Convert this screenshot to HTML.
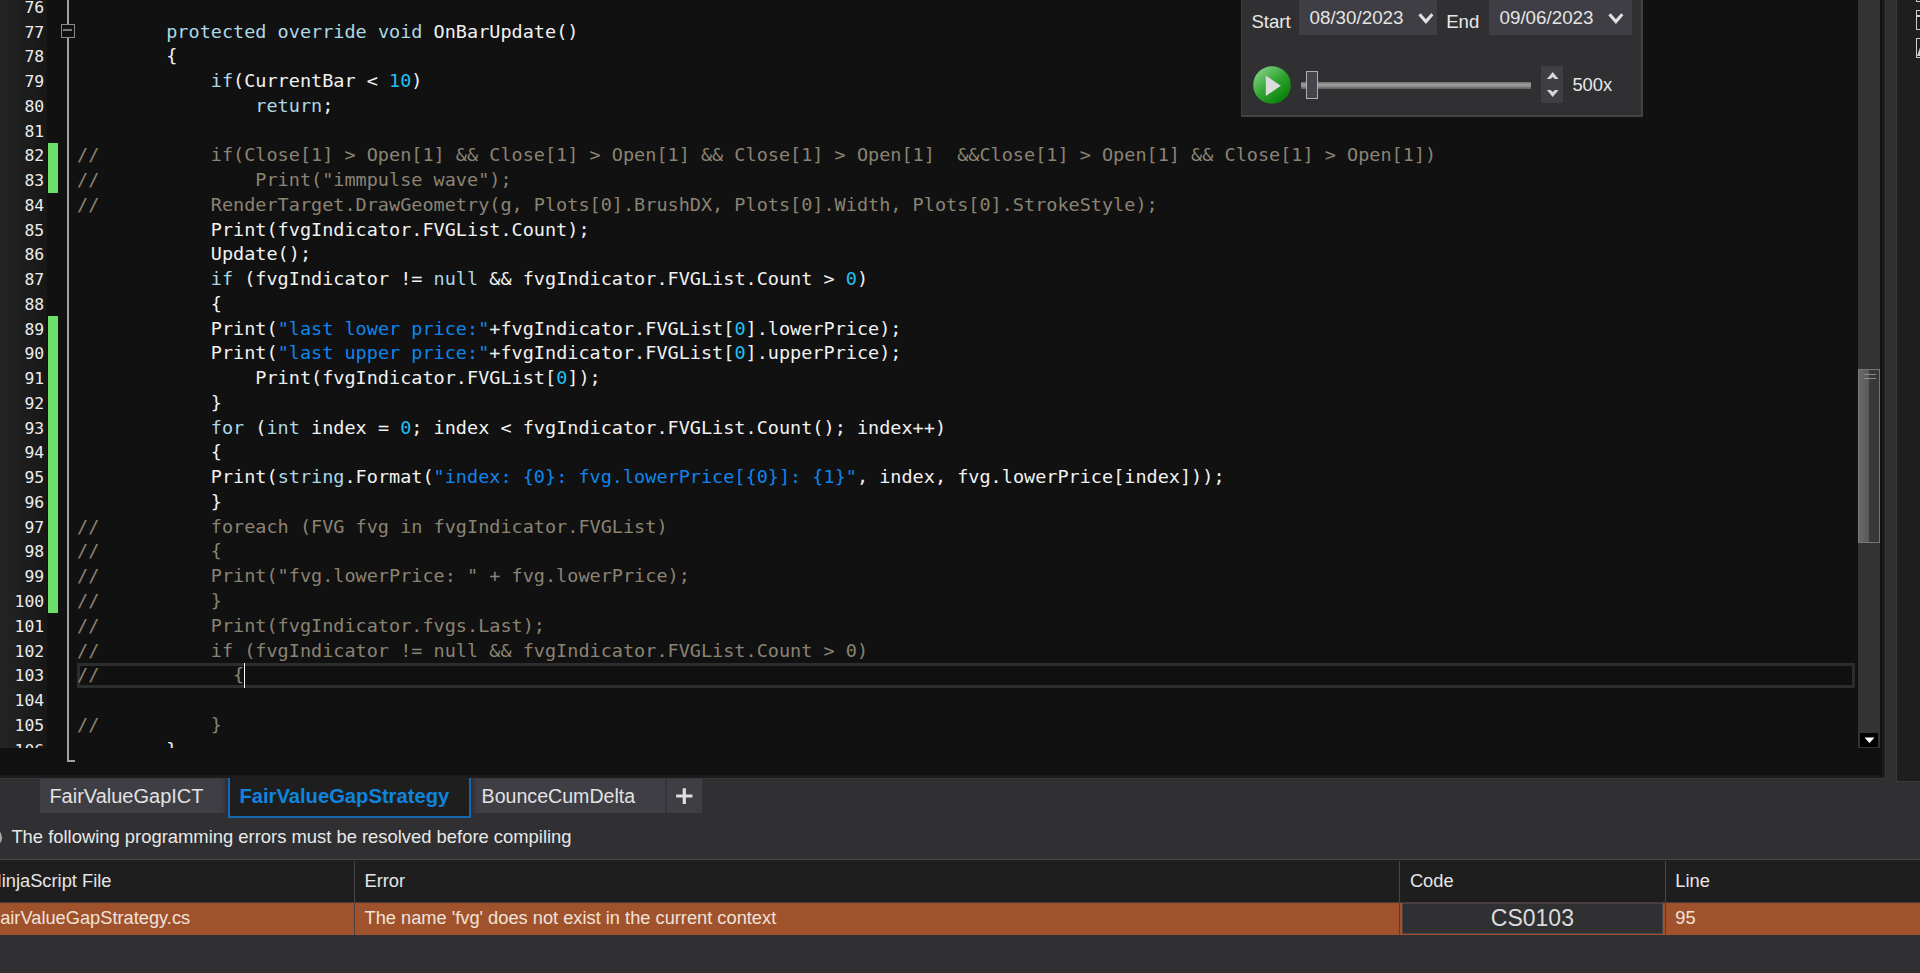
<!DOCTYPE html>
<html lang="en"><head><meta charset="utf-8"><title>NinjaScript Editor</title>
<style>

*{box-sizing:border-box}
html,body{margin:0;padding:0}
body{width:1920px;height:973px;overflow:hidden;background:#303032;position:relative;font-family:"Liberation Sans",sans-serif;color:#e6e6e6}
#editor{position:absolute;left:0;top:0;width:1886px;height:779px;background:#1c1c1c;border-right:1px solid #38383c;border-bottom:1px solid #38383c;overflow:hidden}
#edbg{position:absolute;left:0;top:0;width:1881.7px;height:774.7px;background:#111111}
#clip{position:absolute;left:0;top:0;width:1858px;height:748px;overflow:hidden}
#gutter{position:absolute;left:0;top:0;width:47px;height:748px;background:linear-gradient(90deg,#242424,#171717)}
.chg{position:absolute;left:48.1px;width:10.2px;background:#6ae06a}
.ln{position:absolute;left:0;width:44.2px;text-align:right;font-family:"DejaVu Sans Mono","Liberation Mono",monospace;font-size:16.45px;line-height:24px;height:24px;color:#ececec;white-space:pre;margin-top:1px}
.cl{position:absolute;z-index:2;left:77.1px;font-family:"DejaVu Sans Mono","Liberation Mono",monospace;font-size:18.5px;line-height:24px;height:24px;white-space:pre;color:#f2f2f2;letter-spacing:0.0021px}
.k{color:#add8e6}.n{color:#20c0f2}.s{color:#0c86ec}.c{color:#8b8373}
#curline{position:absolute;left:77px;top:663px;width:1778px;height:24.6px;border:3px solid #2d2d2d;z-index:1}
#caret{position:absolute;left:243.8px;top:663px;width:1.5px;height:24.5px;background:#f6f6f6;z-index:3}
#oline{position:absolute;left:67.2px;top:0;width:2.2px;height:762px;background:#a2a2a2}
#ofoot{position:absolute;left:67.2px;top:760px;width:8px;height:2.1px;background:#a2a2a2}
#fold{position:absolute;left:60.8px;top:24px;width:14.6px;height:14px;border:1.6px solid #888;background:#111}
#fold i{position:absolute;left:1.6px;top:4.2px;width:8.2px;height:2px;background:#787878}

#vsb{position:absolute;left:1858px;top:0;width:22px;height:748px;background:#333334}
#thumb{position:absolute;left:0;top:369px;width:22px;height:174px;border:1px solid #777;background:linear-gradient(90deg,#686868 0,#5a5a5a 48%,#3a3a3a 52%,#363636 100%)}
#thumb b{position:absolute;left:5px;width:12px;height:1px;background:#8a8a8a}
#thumb b:nth-child(1){top:4px}#thumb b:nth-child(2){top:8px}
#dn{position:absolute;left:1.7px;top:732.9px;width:18.8px;height:14px;background:#000}
#dn svg{display:block}

#panel{position:absolute;left:1241px;top:-2px;width:402px;height:118.5px;background:#303032;border:1.5px solid #444446;border-right:2.5px solid #434345;border-bottom:2.5px solid #434345;border-left:1px solid #3c3c3e}
.lbl{position:absolute;font-size:18.6px;line-height:22px;color:#e8e8e8;white-space:pre}
.dbox{position:absolute;top:0;height:34.7px;background:#3e3e44}
.dbox span{position:absolute;left:10.5px;top:6.5px;font-size:18.8px;line-height:22px;color:#e4e4e4;white-space:pre}
.dbox svg{position:absolute;top:12px}
#play{position:absolute;left:1253px;top:66px;width:38px;height:38px}
#track{position:absolute;left:1301px;top:82px;width:230.2px;height:7px;background:linear-gradient(180deg,#707070 0,#a0a0a0 40%,#8c8c8c 60%,#606060 100%)}
#knob{position:absolute;left:1306px;top:71px;width:12.3px;height:28px;background:#45454b;border:1.2px solid #b0b0b0}
#spin{position:absolute;left:1540.6px;top:66px;width:22.4px;height:37px;background:#3e3e44}
#spin svg{display:block}

#rstrip{position:absolute;left:1896px;top:0;width:24px;height:781.6px;background:#1e1e1e;border-left:1px solid #3a3a3c;border-bottom:1.5px solid #3a3a3c}
.ric{position:absolute;left:1915.5px;width:8px;border:1.5px solid #d0d0d0}

.tab{position:absolute;top:779px;height:33.6px;background:#3f3e45;font-size:20px;line-height:35px;white-space:pre;color:#e2e2e2}
#t1{left:40.2px;width:187.8px;padding-left:9.2px;background:linear-gradient(90deg,#3f3e45 0,#3f3e45 182px,#2c2c30 188px)}
#t2{left:228px;top:778px;width:243px;height:40px;background:#1e1e1e;border:2px solid #1468ad;border-top:0;color:#0f84de;font-weight:bold;font-size:20.2px;padding-left:9.4px;line-height:37px}
#t3{left:471px;width:194.6px;padding-left:10.6px;font-size:19.6px;background:linear-gradient(90deg,#2c2c30 0,#3f3e45 6px)}
#t4{left:666.8px;width:35.5px}
#t4 svg{position:absolute;left:8.9px;top:8.7px}
#tsep{position:absolute;left:665.4px;top:779px;width:1.5px;height:33.6px;background:#35353a}
#msg{position:absolute;left:11.4px;top:826px;font-size:18.4px;line-height:22px;white-space:pre;color:#e8e8e8}
#dot{position:absolute;left:-17.5px;top:827.7px;width:19.7px;height:19.7px;border-radius:50%;background:#c8504a;border:2.2px solid #a8a8a8}
#thead{position:absolute;left:0;top:859px;width:1920px;height:44px;background:#1e1e1e;border-top:1.6px solid #47474b}
.th{position:absolute;top:860.6px;height:42px;font-size:18.3px;line-height:39px;white-space:pre;color:#e6e6e6;border-left:1.5px solid #45454a;padding-left:9.6px}
#row{position:absolute;left:0;top:902.4px;width:1920px;height:32.4px;background:#a0522d;border-top:1px solid #4a3a38}
.td{position:absolute;top:903px;height:31.8px;font-size:18.25px;line-height:29px;white-space:pre;color:#efe3da;border-left:1.5px solid #4a4046;padding-left:9.6px}
#code{position:absolute;left:1402.1px;top:903.2px;width:260.6px;height:31.3px;background:#303032;border:1.2px solid #4a4246;font-size:23px;line-height:29px;text-align:center;color:#dcdcdc}
</style></head>
<body>
<div id="editor">
<div id="edbg"></div>
<div id="clip">
<div id="gutter"></div>
<div class="chg" style="top:142.70px;height:49.86px"></div>
<div class="chg" style="top:316.02px;height:297.46px"></div>
<div class="ln" style="top:-5.26px">76</div>
<div class="ln" style="top:19.50px">77</div><div class="cl" style="top:19.50px">        <span class="k">protected override void</span> OnBarUpdate()</div>
<div class="ln" style="top:44.26px">78</div><div class="cl" style="top:44.26px">        {</div>
<div class="ln" style="top:69.02px">79</div><div class="cl" style="top:69.02px">            <span class="k">if</span>(CurrentBar &lt; <span class="n">10</span>)</div>
<div class="ln" style="top:93.78px">80</div><div class="cl" style="top:93.78px">                <span class="k">return</span>;</div>
<div class="ln" style="top:118.54px">81</div>
<div class="ln" style="top:143.30px">82</div><div class="cl" style="top:143.30px"><span class="c">//          if(Close[1] &gt; Open[1] &amp;&amp; Close[1] &gt; Open[1] &amp;&amp; Close[1] &gt; Open[1]  &amp;&amp;Close[1] &gt; Open[1] &amp;&amp; Close[1] &gt; Open[1])</span></div>
<div class="ln" style="top:168.06px">83</div><div class="cl" style="top:168.06px"><span class="c">//              Print("immpulse wave");</span></div>
<div class="ln" style="top:192.82px">84</div><div class="cl" style="top:192.82px"><span class="c">//          RenderTarget.DrawGeometry(g, Plots[0].BrushDX, Plots[0].Width, Plots[0].StrokeStyle);</span></div>
<div class="ln" style="top:217.58px">85</div><div class="cl" style="top:217.58px">            Print(fvgIndicator.FVGList.Count);</div>
<div class="ln" style="top:242.34px">86</div><div class="cl" style="top:242.34px">            Update();</div>
<div class="ln" style="top:267.10px">87</div><div class="cl" style="top:267.10px">            <span class="k">if</span> (fvgIndicator != <span class="k">null</span> &amp;&amp; fvgIndicator.FVGList.Count &gt; <span class="n">0</span>)</div>
<div class="ln" style="top:291.86px">88</div><div class="cl" style="top:291.86px">            {</div>
<div class="ln" style="top:316.62px">89</div><div class="cl" style="top:316.62px">            Print(<span class="s">"last lower price:"</span>+fvgIndicator.FVGList[<span class="n">0</span>].lowerPrice);</div>
<div class="ln" style="top:341.38px">90</div><div class="cl" style="top:341.38px">            Print(<span class="s">"last upper price:"</span>+fvgIndicator.FVGList[<span class="n">0</span>].upperPrice);</div>
<div class="ln" style="top:366.14px">91</div><div class="cl" style="top:366.14px">                Print(fvgIndicator.FVGList[<span class="n">0</span>]);</div>
<div class="ln" style="top:390.90px">92</div><div class="cl" style="top:390.90px">            }</div>
<div class="ln" style="top:415.66px">93</div><div class="cl" style="top:415.66px">            <span class="k">for</span> (<span class="k">int</span> index = <span class="n">0</span>; index &lt; fvgIndicator.FVGList.Count(); index++)</div>
<div class="ln" style="top:440.42px">94</div><div class="cl" style="top:440.42px">            {</div>
<div class="ln" style="top:465.18px">95</div><div class="cl" style="top:465.18px">            Print(<span class="k">string</span>.Format(<span class="s">"index: {0}: fvg.lowerPrice[{0}]: {1}"</span>, index, fvg.lowerPrice[index]));</div>
<div class="ln" style="top:489.94px">96</div><div class="cl" style="top:489.94px">            }</div>
<div class="ln" style="top:514.70px">97</div><div class="cl" style="top:514.70px"><span class="c">//          foreach (FVG fvg in fvgIndicator.FVGList)</span></div>
<div class="ln" style="top:539.46px">98</div><div class="cl" style="top:539.46px"><span class="c">//          {</span></div>
<div class="ln" style="top:564.22px">99</div><div class="cl" style="top:564.22px"><span class="c">//          Print("fvg.lowerPrice: " + fvg.lowerPrice);</span></div>
<div class="ln" style="top:588.98px">100</div><div class="cl" style="top:588.98px"><span class="c">//          }</span></div>
<div class="ln" style="top:613.74px">101</div><div class="cl" style="top:613.74px"><span class="c">//          Print(fvgIndicator.fvgs.Last);</span></div>
<div class="ln" style="top:638.50px">102</div><div class="cl" style="top:638.50px"><span class="c">//          if (fvgIndicator != null &amp;&amp; fvgIndicator.FVGList.Count &gt; 0)</span></div>
<div class="ln" style="top:663.26px">103</div><div class="cl" style="top:663.26px"><span class="c">//            {</span></div>
<div class="ln" style="top:688.02px">104</div>
<div class="ln" style="top:712.78px">105</div><div class="cl" style="top:712.78px"><span class="c">//          }</span></div>
<div class="ln" style="top:737.54px">106</div><div class="cl" style="top:737.54px">        }</div>
<div id="curline"></div><div id="caret"></div>
</div>
<div id="oline"></div><div id="ofoot"></div>
<div id="fold"><i></i></div>
<div id="vsb"><div id="thumb"><b></b><b></b></div><div id="dn"><svg width="19" height="14" viewBox="0 0 19 14"><path d="M4.5 4.5h10l-5 5.5z" fill="#fff"/></svg></div></div>
</div>
<div id="panel"></div>
<div class="lbl" style="left:1251.4px;top:11.1px">Start</div>
<div class="dbox" style="left:1299px;width:138px"><span>08/30/2023</span><svg style="left:118.6px" width="16" height="13" viewBox="0 0 16 13"><path d="M1.5 2.2l6.4 7.4 6.4-7.4" fill="none" stroke="#e2e2e2" stroke-width="3"/></svg></div>
<div class="lbl" style="left:1446.2px;top:11.1px">End</div>
<div class="dbox" style="left:1489px;width:142.6px"><span>09/06/2023</span><svg style="left:118.8px" width="16" height="13" viewBox="0 0 16 13"><path d="M1.5 2.2l6.4 7.4 6.4-7.4" fill="none" stroke="#e2e2e2" stroke-width="3"/></svg></div>
<svg id="play" viewBox="0 0 38 38"><defs><linearGradient id="pg" x1="0.15" y1="0.1" x2="0.85" y2="0.9"><stop offset="0" stop-color="#7fce7f"/><stop offset="0.5" stop-color="#2fa42f"/><stop offset="1" stop-color="#078007"/></linearGradient></defs><circle cx="19" cy="19" r="18.8" fill="url(#pg)"/><path d="M12.8 9.6v20.4l15-10.2z" fill="#dcdcdc"/></svg>
<div id="track"></div><div id="knob"></div>
<div id="spin"><svg width="22.4" height="37" viewBox="0 0 22.4 37"><path d="M5.9 13.1l5.8-7 5.8 7z M5.9 24l5.8 7 5.8-7z" fill="#d6d6d6"/><path d="M9.5 13.1l2.2-2 2.2 2z M9.5 24l2.2 2 2.2-2z" fill="#3e3e44"/></svg></div>
<div class="lbl" style="left:1572.4px;top:73.9px;font-size:18.4px">500x</div>
<div id="rstrip"></div>
<div class="ric" style="top:-8px;height:10px"></div>
<div class="ric" style="top:10px;height:20px"><u style="position:absolute;left:0;top:4px;width:8px;height:1.5px;background:#d0d0d0"></u></div>
<div class="ric" style="top:38px;height:19.8px"><svg style="position:absolute;left:0;top:0" width="6" height="17" viewBox="0 0 6 17"><path d="M0 17L3.5 7 6 7V17z" fill="#d0d0d0"/></svg></div>
<div class="tab" id="t1">FairValueGapICT</div>
<div class="tab" id="t2">FairValueGapStrategy</div>
<div class="tab" id="t3">BounceCumDelta</div>
<div class="tab" id="t4"><svg width="17" height="17" viewBox="0 0 17 17"><path d="M8.3 0.3v15.6M0.1 8h16.4" stroke="#dedede" stroke-width="3.2" fill="none"/></svg></div>
<div id="tsep"></div>
<div id="dot"></div>
<div id="msg">The following programming errors must be resolved before compiling</div>
<div id="thead"></div>
<div class="th" style="left:-12px;width:10px;border:0;padding-left:0"><span style="position:absolute;left:0.5px">NinjaScript File</span></div>
<div class="th" style="left:353.9px">Error</div>
<div class="th" style="left:1399.3px">Code</div>
<div class="th" style="left:1664.7px">Line</div>
<div id="row"></div>
<div class="td" style="left:-12px;border:0;padding-left:0"><span style="position:absolute;left:1px">FairValueGapStrategy.cs</span></div>
<div class="td" style="left:353.9px">The name 'fvg' does not exist in the current context</div>
<div id="code">CS0103</div>
<div class="td" style="left:1399.3px;width:3px;padding:0"></div>
<div class="td" style="left:1664.7px">95</div>
</body></html>
